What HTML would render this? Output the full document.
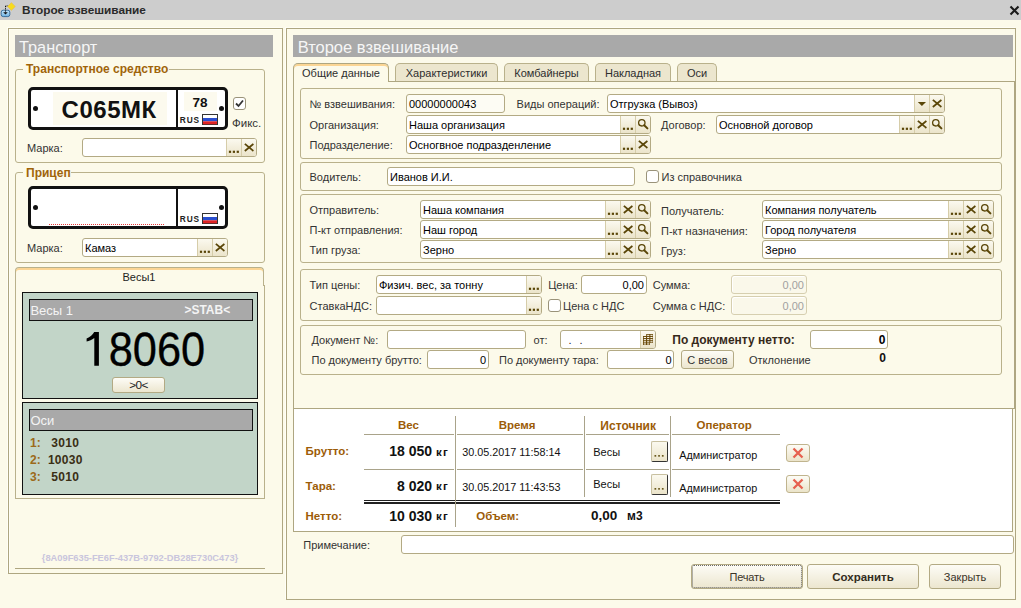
<!DOCTYPE html><html><head><meta charset="utf-8"><style>
html,body{margin:0;padding:0;}
body{width:1021px;height:608px;overflow:hidden;position:relative;background:#fcfaea;font-family:"Liberation Sans",sans-serif;}
.a{position:absolute;box-sizing:border-box;}
.t{white-space:nowrap;}
.inp{border:1px solid #b3aa84;border-radius:3px;}
.grp{border:1px solid #b9b18b;border-radius:3px;}
.sb{background:linear-gradient(#fbf9ef,#ebe4ca);border-left:1px solid #d6cda9;}
.btn{border:1px solid #b3aa84;border-radius:3px;background:linear-gradient(#fdfcf6,#ece6cf);}
</style></head><body>

<div class="a " style="left:0px;top:0px;width:1021px;height:20px;background:#cdcdcd;"></div>
<svg class="a" style="left:0;top:0" width="20" height="20">
<defs><linearGradient id="ig" x1="0" y1="0" x2="0" y2="1"><stop offset="0" stop-color="#c4e6fb"/><stop offset="1" stop-color="#72b4e2"/></linearGradient></defs><rect x="1.2" y="10.2" width="8.6" height="6.4" rx="2" fill="url(#ig)" stroke="#3a6f9c" stroke-width="1"/>
<path d="M5.5 6V13" stroke="#111" stroke-width="1" stroke-dasharray="1 0.8"/>
<path d="M5.5 6H9" stroke="#111" stroke-width="1" stroke-dasharray="1 0.8"/>
<path d="M3.2 12.2H7.8L5.5 14.6Z" fill="#111"/>
<path d="M11.4 2.6L15.3 6.5L11.4 10.4L7.5 6.5Z" fill="#f7dc1e" stroke="#e0b860" stroke-width="0.6"/>
</svg>
<div class="a t" style="left:22px;top:5.01px;font-size:11.8px;line-height:11.8px;font-weight:700;color:#2a2a2a;">Второе взвешивание</div>
<svg class="a" style="left:1008px;top:4px" width="13" height="13"><path d="M2.5 2.5L10.5 10.5M10.5 2.5L2.5 10.5" stroke="#1a1a1a" stroke-width="2.1"/></svg>
<div class="a " style="left:8px;top:28px;width:275px;height:546px;border:1px solid #aea681;box-shadow:-1px -1px 0 #fffef6, inset 1px 1px 0 #fffef4;"></div>
<div class="a " style="left:15px;top:35px;width:258px;height:22px;background:#a9a9a9;"></div>
<div class="a t" style="left:19px;top:38.70px;font-size:16.3px;line-height:16.3px;font-weight:400;color:#f6f6f6;">Транспорт</div>
<div class="a grp" style="left:15px;top:69px;width:250px;height:93.5px;"></div>
<div class="a " style="left:23px;top:67px;width:145.5px;height:5px;background:#fcfaea;"></div>
<div class="a t" style="left:26px;top:63.34px;font-size:12px;line-height:12px;font-weight:700;color:#a0640a;">Транспортное средство</div>
<div class="a " style="left:28px;top:87px;width:200px;height:43px;border:3px solid #111;border-radius:5px;background:#fff;"></div>
<div class="a " style="left:176px;top:87px;width:2.1999999999999886px;height:43px;background:#111;"></div>
<div class="a" style="left:33px;top:106.0px;width:5px;height:5px;border-radius:50%;background:#111"></div>
<div class="a" style="left:219px;top:106.0px;width:5px;height:5px;border-radius:50%;background:#111"></div>
<div class="a t" style="left:179.8px;top:116.47px;font-size:8.3px;line-height:8.3px;font-weight:700;color:#222;letter-spacing:0.9px;">RUS</div>
<svg class="a" style="left:201.5px;top:114px" width="16" height="11"><rect x="0.5" y="0.5" width="15" height="10" fill="#fff" stroke="#333" stroke-width="1"/><rect x="1" y="4" width="14" height="3.3" fill="#2b4fd0"/><rect x="1" y="7.3" width="14" height="3" fill="#e02424"/></svg>
<div class="a " style="left:53px;top:92px;width:114px;height:33px;background:#fcfaee;"></div>
<div class="a t" style="left:61.5px;top:98.18px;font-size:24px;line-height:24px;font-weight:700;color:#111;letter-spacing:0.55px;">С065МК</div>
<div class="a " style="left:184px;top:92px;width:33px;height:19px;background:#fcfaee;"></div>
<div class="a t" style="left:192.5px;top:96.27px;font-size:13.5px;line-height:13.5px;font-weight:700;color:#111;">78</div>
<div class="a " style="left:233px;top:97px;width:13px;height:13px;border:1px solid #9a937a;border-radius:3px;background:#fff;box-sizing:border-box;"></div>
<svg class="a" style="left:233px;top:97px" width="13" height="13"><path d="M3 6.5L5.5 9L10 3.5" stroke="#333" stroke-width="1.8" fill="none"/></svg>
<div class="a t" style="left:232px;top:117.77px;font-size:11.5px;line-height:11.5px;font-weight:400;color:#333333;">Фикс.</div>
<div class="a t" style="left:27px;top:143.19px;font-size:11px;line-height:11px;font-weight:400;color:#333333;">Марка:</div>
<div class="a inp" style="left:82px;top:138px;width:175px;height:19px;background:#fff;"></div>
<div class="a sb" style="left:241px;top:139px;width:15px;height:17px;border-radius:0 2px 2px 0;"></div>
<svg class="a" style="left:241px;top:138.0px" width="15" height="18"><path d="M4.5 6.5L11.7 12.4M11.7 6.5L4.5 12.4" stroke="#5a4608" stroke-width="1.75" stroke-linecap="square"/></svg>
<div class="a sb" style="left:226px;top:139px;width:15px;height:17px;"></div>
<svg class="a" style="left:226px;top:138.0px" width="15" height="18"><rect x="2.9" y="12.7" width="2.2" height="2.2" fill="#5a4608"/><rect x="6.8" y="12.7" width="2.2" height="2.2" fill="#5a4608"/><rect x="10.7" y="12.7" width="2.2" height="2.2" fill="#5a4608"/></svg>
<div class="a grp" style="left:15px;top:172px;width:250px;height:91px;"></div>
<div class="a " style="left:23px;top:170px;width:47.5px;height:5px;background:#fcfaea;"></div>
<div class="a t" style="left:26px;top:166.64px;font-size:12px;line-height:12px;font-weight:700;color:#a0640a;">Прицеп</div>
<div class="a " style="left:28px;top:186px;width:200px;height:43px;border:3px solid #111;border-radius:5px;background:#fff;"></div>
<div class="a " style="left:176px;top:186px;width:2.1999999999999886px;height:43px;background:#111;"></div>
<div class="a" style="left:33px;top:205.0px;width:5px;height:5px;border-radius:50%;background:#111"></div>
<div class="a" style="left:219px;top:205.0px;width:5px;height:5px;border-radius:50%;background:#111"></div>
<div class="a t" style="left:179.8px;top:215.47px;font-size:8.3px;line-height:8.3px;font-weight:700;color:#222;letter-spacing:0.9px;">RUS</div>
<svg class="a" style="left:201.5px;top:213px" width="16" height="11"><rect x="0.5" y="0.5" width="15" height="10" fill="#fff" stroke="#333" stroke-width="1"/><rect x="1" y="4" width="14" height="3.3" fill="#2b4fd0"/><rect x="1" y="7.3" width="14" height="3" fill="#e02424"/></svg>
<div class="a" style="left:49px;top:224px;width:115px;height:1px;background:repeating-linear-gradient(90deg,#e83a3a 0 1px,transparent 1px 2px)"></div>
<div class="a t" style="left:27px;top:243.19px;font-size:11px;line-height:11px;font-weight:400;color:#333333;">Марка:</div>
<div class="a inp" style="left:82px;top:238px;width:146px;height:19px;background:#fff;"></div>
<div class="a sb" style="left:212px;top:239px;width:15px;height:17px;border-radius:0 2px 2px 0;"></div>
<svg class="a" style="left:212px;top:238.0px" width="15" height="18"><path d="M4.5 6.5L11.7 12.4M11.7 6.5L4.5 12.4" stroke="#5a4608" stroke-width="1.75" stroke-linecap="square"/></svg>
<div class="a sb" style="left:197px;top:239px;width:15px;height:17px;"></div>
<svg class="a" style="left:197px;top:238.0px" width="15" height="18"><rect x="2.9" y="12.7" width="2.2" height="2.2" fill="#5a4608"/><rect x="6.8" y="12.7" width="2.2" height="2.2" fill="#5a4608"/><rect x="10.7" y="12.7" width="2.2" height="2.2" fill="#5a4608"/></svg>
<div class="a t" style="left:85px;top:242.99px;font-size:11px;line-height:11px;font-weight:400;color:#000;">Камаз</div>
<div class="a " style="left:15px;top:285px;width:250px;height:214px;border:1px solid #b9b18b;border-top:none;"></div>
<div class="a " style="left:15px;top:267px;width:249px;height:19px;border:1px solid #b9b18b;border-bottom:none;border-radius:4px 4px 0 0;background:#fcfaea;box-shadow:inset 0 2px 0 #fbd594;"></div>
<div class="a t" style="left:-11px;width:300px;text-align:center;top:271.69px;font-size:11px;line-height:11px;font-weight:400;color:#222;">Весы1</div>
<div class="a " style="left:22px;top:292px;width:236px;height:107px;border:1.6px solid #111;background:#c2d5c8;"></div>
<div class="a " style="left:29px;top:299px;width:224px;height:22px;border:1.5px solid #111;background:#a9a9a9;"></div>
<div class="a t" style="left:30.4px;top:304.20px;font-size:13px;line-height:13px;font-weight:400;color:#f4f4f4;">Весы 1</div>
<div class="a t" style="left:184.4px;top:303.94px;font-size:12px;line-height:12px;font-weight:700;color:#f4f4f4;">&gt;STAB&lt;</div>
<div class="a t" style="left:7.300000000000011px;width:300px;text-align:center;top:324.82px;font-size:49px;line-height:49px;font-weight:400;color:#000;transform:scaleX(0.885);-webkit-text-stroke:0.35px #000;">8060</div>
<svg class="a" style="left:80px;top:328px" width="30" height="42"><path d="M14.2 4H18.9V37.7H14.3V9.9C11.9 11.7 9.3 12.9 6.6 13.6V10.4C10.2 8.9 12.6 6.7 14.2 4Z" fill="#000"/></svg>
<div class="a btn" style="left:112px;top:377px;width:53px;height:16px;"></div>
<div class="a t" style="left:-11.5px;width:300px;text-align:center;top:380.31px;font-size:11.8px;line-height:11.8px;font-weight:400;color:#222;letter-spacing:-0.6px;">&gt;0&lt;</div>
<div class="a " style="left:22px;top:402px;width:236px;height:93px;border:1.6px solid #111;background:#c2d5c8;"></div>
<div class="a " style="left:29px;top:409px;width:224px;height:22px;border:1.5px solid #111;background:#a9a9a9;"></div>
<div class="a t" style="left:30.4px;top:413.70px;font-size:13px;line-height:13px;font-weight:400;color:#f4f4f4;">Оси</div>
<div class="a t" style="left:30px;top:437.24px;font-size:12px;line-height:12px;font-weight:700;color:#9c6a1a;">1:</div>
<div class="a t" style="left:-84.7px;width:300px;text-align:center;top:437.24px;font-size:12px;line-height:12px;font-weight:700;color:#3a2e14;letter-spacing:0.3px;">3010</div>
<div class="a t" style="left:30px;top:454.14px;font-size:12px;line-height:12px;font-weight:700;color:#9c6a1a;">2:</div>
<div class="a t" style="left:-84.7px;width:300px;text-align:center;top:454.14px;font-size:12px;line-height:12px;font-weight:700;color:#3a2e14;letter-spacing:0.3px;">10030</div>
<div class="a t" style="left:30px;top:471.34px;font-size:12px;line-height:12px;font-weight:700;color:#9c6a1a;">3:</div>
<div class="a t" style="left:-84.7px;width:300px;text-align:center;top:471.34px;font-size:12px;line-height:12px;font-weight:700;color:#3a2e14;letter-spacing:0.3px;">5010</div>
<div class="a t" style="left:-10px;width:300px;text-align:center;top:554.43px;font-size:9.3px;line-height:9.3px;font-weight:700;color:#c9c5dd;">{8A09F635-FE6F-437B-9792-DB28E730C473}</div>
<div class="a " style="left:15px;top:568px;width:250px;height:1px;background:#aea681;"></div>
<div class="a " style="left:286px;top:28px;width:730px;height:572px;border:1px solid #aea681;box-shadow:-1px -1px 0 #fffef6;"></div>
<div class="a " style="left:293px;top:35px;width:720px;height:22px;background:#a9a9a9;"></div>
<div class="a t" style="left:297.7px;top:38.53px;font-size:16.5px;line-height:16.5px;font-weight:400;color:#f6f6f6;">Второе взвешивание</div>
<div class="a " style="left:293px;top:81px;width:722px;height:328px;border:1px solid #aea681;"></div>
<div class="a " style="left:293px;top:63px;width:96px;height:19px;border:1px solid #aea681;border-bottom:none;border-radius:5px 5px 0 0;background:#fcfaea;box-shadow:inset 0 2px 0 #fbd594;"></div>
<div class="a t" style="left:191.0px;width:300px;text-align:center;top:67.99px;font-size:11px;line-height:11px;font-weight:400;color:#2e2e2e;">Общие данные</div>
<div class="a " style="left:395px;top:63px;width:103px;height:18px;border:1px solid #b9b18b;border-bottom:none;border-radius:5px 5px 0 0;background:#ece6ce;"></div>
<div class="a t" style="left:296.5px;width:300px;text-align:center;top:67.99px;font-size:11px;line-height:11px;font-weight:400;color:#2e2e2e;">Характеристики</div>
<div class="a " style="left:504px;top:63px;width:85px;height:18px;border:1px solid #b9b18b;border-bottom:none;border-radius:5px 5px 0 0;background:#ece6ce;"></div>
<div class="a t" style="left:396.5px;width:300px;text-align:center;top:67.99px;font-size:11px;line-height:11px;font-weight:400;color:#2e2e2e;">Комбайнеры</div>
<div class="a " style="left:595px;top:63px;width:76px;height:18px;border:1px solid #b9b18b;border-bottom:none;border-radius:5px 5px 0 0;background:#ece6ce;"></div>
<div class="a t" style="left:483.0px;width:300px;text-align:center;top:67.99px;font-size:11px;line-height:11px;font-weight:400;color:#2e2e2e;">Накладная</div>
<div class="a " style="left:677px;top:63px;width:40px;height:18px;border:1px solid #b9b18b;border-bottom:none;border-radius:5px 5px 0 0;background:#ece6ce;"></div>
<div class="a t" style="left:547.0px;width:300px;text-align:center;top:67.99px;font-size:11px;line-height:11px;font-weight:400;color:#2e2e2e;">Оси</div>
<div class="a grp" style="left:300px;top:88px;width:702px;height:71px;"></div>
<div class="a t" style="left:309.5px;top:98.99px;font-size:11px;line-height:11px;font-weight:400;color:#333333;">№ взвешивания:</div>
<div class="a inp" style="left:406px;top:94px;width:99px;height:19px;background:#fdfcf4;"></div>
<div class="a t" style="left:409px;top:98.99px;font-size:11px;line-height:11px;font-weight:400;color:#000;">00000000043</div>
<div class="a t" style="left:516.6px;top:98.99px;font-size:11px;line-height:11px;font-weight:400;color:#333333;">Виды операций:</div>
<div class="a inp" style="left:607px;top:94px;width:338px;height:19px;background:#fff;"></div>
<div class="a sb" style="left:929px;top:95px;width:15px;height:17px;border-radius:0 2px 2px 0;"></div>
<svg class="a" style="left:929px;top:94.0px" width="15" height="18"><path d="M4.5 6.5L11.7 12.4M11.7 6.5L4.5 12.4" stroke="#5a4608" stroke-width="1.75" stroke-linecap="square"/></svg>
<div class="a sb" style="left:914px;top:95px;width:15px;height:17px;"></div>
<svg class="a" style="left:914px;top:94.0px" width="15" height="18"><path d="M3.8 7.9H12L7.9 12.1Z" fill="#5a4608"/></svg>
<div class="a t" style="left:610px;top:98.99px;font-size:11px;line-height:11px;font-weight:400;color:#000;">Отгрузка (Вывоз)</div>
<div class="a t" style="left:309.5px;top:119.79px;font-size:11px;line-height:11px;font-weight:400;color:#333333;">Организация:</div>
<div class="a inp" style="left:406px;top:115px;width:245px;height:19px;background:#fff;"></div>
<div class="a sb" style="left:635px;top:116px;width:15px;height:17px;border-radius:0 2px 2px 0;"></div>
<svg class="a" style="left:635px;top:115.0px" width="15" height="18"><circle cx="6.8" cy="7.8" r="3.2" stroke="#5a4608" stroke-width="1.3" fill="none"/><path d="M9.2 10.2L12.4 13.4" stroke="#5a4608" stroke-width="2" stroke-linecap="round"/></svg>
<div class="a sb" style="left:620px;top:116px;width:15px;height:17px;"></div>
<svg class="a" style="left:620px;top:115.0px" width="15" height="18"><rect x="2.9" y="12.7" width="2.2" height="2.2" fill="#5a4608"/><rect x="6.8" y="12.7" width="2.2" height="2.2" fill="#5a4608"/><rect x="10.7" y="12.7" width="2.2" height="2.2" fill="#5a4608"/></svg>
<div class="a t" style="left:409px;top:119.99px;font-size:11px;line-height:11px;font-weight:400;color:#000;">Наша организация</div>
<div class="a t" style="left:661px;top:119.79px;font-size:11px;line-height:11px;font-weight:400;color:#333333;">Договор:</div>
<div class="a inp" style="left:716px;top:115px;width:229px;height:19px;background:#fff;"></div>
<div class="a sb" style="left:929px;top:116px;width:15px;height:17px;border-radius:0 2px 2px 0;"></div>
<svg class="a" style="left:929px;top:115.0px" width="15" height="18"><circle cx="6.8" cy="7.8" r="3.2" stroke="#5a4608" stroke-width="1.3" fill="none"/><path d="M9.2 10.2L12.4 13.4" stroke="#5a4608" stroke-width="2" stroke-linecap="round"/></svg>
<div class="a sb" style="left:914px;top:116px;width:15px;height:17px;"></div>
<svg class="a" style="left:914px;top:115.0px" width="15" height="18"><path d="M4.5 6.5L11.7 12.4M11.7 6.5L4.5 12.4" stroke="#5a4608" stroke-width="1.75" stroke-linecap="square"/></svg>
<div class="a sb" style="left:899px;top:116px;width:15px;height:17px;"></div>
<svg class="a" style="left:899px;top:115.0px" width="15" height="18"><rect x="2.9" y="12.7" width="2.2" height="2.2" fill="#5a4608"/><rect x="6.8" y="12.7" width="2.2" height="2.2" fill="#5a4608"/><rect x="10.7" y="12.7" width="2.2" height="2.2" fill="#5a4608"/></svg>
<div class="a t" style="left:719px;top:119.99px;font-size:11px;line-height:11px;font-weight:400;color:#000;">Основной договор</div>
<div class="a t" style="left:309.5px;top:140.19px;font-size:11px;line-height:11px;font-weight:400;color:#333333;">Подразделение:</div>
<div class="a inp" style="left:406px;top:135px;width:245px;height:19px;background:#fff;"></div>
<div class="a sb" style="left:635px;top:136px;width:15px;height:17px;border-radius:0 2px 2px 0;"></div>
<svg class="a" style="left:635px;top:135.0px" width="15" height="18"><path d="M4.5 6.5L11.7 12.4M11.7 6.5L4.5 12.4" stroke="#5a4608" stroke-width="1.75" stroke-linecap="square"/></svg>
<div class="a sb" style="left:620px;top:136px;width:15px;height:17px;"></div>
<svg class="a" style="left:620px;top:135.0px" width="15" height="18"><rect x="2.9" y="12.7" width="2.2" height="2.2" fill="#5a4608"/><rect x="6.8" y="12.7" width="2.2" height="2.2" fill="#5a4608"/><rect x="10.7" y="12.7" width="2.2" height="2.2" fill="#5a4608"/></svg>
<div class="a t" style="left:409px;top:139.99px;font-size:11px;line-height:11px;font-weight:400;color:#000;">Осногвное подразденление</div>
<div class="a grp" style="left:300px;top:162px;width:702px;height:29px;"></div>
<div class="a t" style="left:309.5px;top:172.19px;font-size:11px;line-height:11px;font-weight:400;color:#333333;">Водитель:</div>
<div class="a inp" style="left:387px;top:167px;width:248px;height:19px;background:#fff;"></div>
<div class="a t" style="left:390px;top:171.99px;font-size:11px;line-height:11px;font-weight:400;color:#000;">Иванов И.И.</div>
<div class="a " style="left:646px;top:170px;width:13px;height:13px;border:1px solid #9a937a;border-radius:3px;background:#fff;box-sizing:border-box;"></div>
<div class="a t" style="left:661.5px;top:172.19px;font-size:11px;line-height:11px;font-weight:400;color:#333333;">Из справочника</div>
<div class="a grp" style="left:300px;top:194px;width:702px;height:69px;"></div>
<div class="a t" style="left:309.5px;top:205.19px;font-size:11px;line-height:11px;font-weight:400;color:#333333;">Отправитель:</div>
<div class="a inp" style="left:420px;top:200px;width:231px;height:18.5px;background:#fff;"></div>
<div class="a sb" style="left:635px;top:201px;width:15px;height:16.5px;border-radius:0 2px 2px 0;"></div>
<svg class="a" style="left:635px;top:199.75px" width="15" height="18"><circle cx="6.8" cy="7.8" r="3.2" stroke="#5a4608" stroke-width="1.3" fill="none"/><path d="M9.2 10.2L12.4 13.4" stroke="#5a4608" stroke-width="2" stroke-linecap="round"/></svg>
<div class="a sb" style="left:620px;top:201px;width:15px;height:16.5px;"></div>
<svg class="a" style="left:620px;top:199.75px" width="15" height="18"><path d="M4.5 6.5L11.7 12.4M11.7 6.5L4.5 12.4" stroke="#5a4608" stroke-width="1.75" stroke-linecap="square"/></svg>
<div class="a sb" style="left:605px;top:201px;width:15px;height:16.5px;"></div>
<svg class="a" style="left:605px;top:199.75px" width="15" height="18"><rect x="2.9" y="12.7" width="2.2" height="2.2" fill="#5a4608"/><rect x="6.8" y="12.7" width="2.2" height="2.2" fill="#5a4608"/><rect x="10.7" y="12.7" width="2.2" height="2.2" fill="#5a4608"/></svg>
<div class="a t" style="left:423px;top:204.74px;font-size:11px;line-height:11px;font-weight:400;color:#000;">Наша компания</div>
<div class="a t" style="left:309.5px;top:225.19px;font-size:11px;line-height:11px;font-weight:400;color:#333333;">П-кт отправления:</div>
<div class="a inp" style="left:420px;top:220px;width:231px;height:18.5px;background:#fff;"></div>
<div class="a sb" style="left:635px;top:221px;width:15px;height:16.5px;border-radius:0 2px 2px 0;"></div>
<svg class="a" style="left:635px;top:219.75px" width="15" height="18"><circle cx="6.8" cy="7.8" r="3.2" stroke="#5a4608" stroke-width="1.3" fill="none"/><path d="M9.2 10.2L12.4 13.4" stroke="#5a4608" stroke-width="2" stroke-linecap="round"/></svg>
<div class="a sb" style="left:620px;top:221px;width:15px;height:16.5px;"></div>
<svg class="a" style="left:620px;top:219.75px" width="15" height="18"><path d="M4.5 6.5L11.7 12.4M11.7 6.5L4.5 12.4" stroke="#5a4608" stroke-width="1.75" stroke-linecap="square"/></svg>
<div class="a sb" style="left:605px;top:221px;width:15px;height:16.5px;"></div>
<svg class="a" style="left:605px;top:219.75px" width="15" height="18"><rect x="2.9" y="12.7" width="2.2" height="2.2" fill="#5a4608"/><rect x="6.8" y="12.7" width="2.2" height="2.2" fill="#5a4608"/><rect x="10.7" y="12.7" width="2.2" height="2.2" fill="#5a4608"/></svg>
<div class="a t" style="left:423px;top:224.74px;font-size:11px;line-height:11px;font-weight:400;color:#000;">Наш город</div>
<div class="a t" style="left:309.5px;top:245.19px;font-size:11px;line-height:11px;font-weight:400;color:#333333;">Тип груза:</div>
<div class="a inp" style="left:420px;top:240px;width:231px;height:18.5px;background:#fff;"></div>
<div class="a sb" style="left:635px;top:241px;width:15px;height:16.5px;border-radius:0 2px 2px 0;"></div>
<svg class="a" style="left:635px;top:239.75px" width="15" height="18"><circle cx="6.8" cy="7.8" r="3.2" stroke="#5a4608" stroke-width="1.3" fill="none"/><path d="M9.2 10.2L12.4 13.4" stroke="#5a4608" stroke-width="2" stroke-linecap="round"/></svg>
<div class="a sb" style="left:620px;top:241px;width:15px;height:16.5px;"></div>
<svg class="a" style="left:620px;top:239.75px" width="15" height="18"><path d="M4.5 6.5L11.7 12.4M11.7 6.5L4.5 12.4" stroke="#5a4608" stroke-width="1.75" stroke-linecap="square"/></svg>
<div class="a sb" style="left:605px;top:241px;width:15px;height:16.5px;"></div>
<svg class="a" style="left:605px;top:239.75px" width="15" height="18"><rect x="2.9" y="12.7" width="2.2" height="2.2" fill="#5a4608"/><rect x="6.8" y="12.7" width="2.2" height="2.2" fill="#5a4608"/><rect x="10.7" y="12.7" width="2.2" height="2.2" fill="#5a4608"/></svg>
<div class="a t" style="left:423px;top:244.74px;font-size:11px;line-height:11px;font-weight:400;color:#000;">Зерно</div>
<div class="a t" style="left:661px;top:206.19px;font-size:11px;line-height:11px;font-weight:400;color:#333333;">Получатель:</div>
<div class="a inp" style="left:762px;top:200px;width:232px;height:18.5px;background:#fff;"></div>
<div class="a sb" style="left:978px;top:201px;width:15px;height:16.5px;border-radius:0 2px 2px 0;"></div>
<svg class="a" style="left:978px;top:199.75px" width="15" height="18"><circle cx="6.8" cy="7.8" r="3.2" stroke="#5a4608" stroke-width="1.3" fill="none"/><path d="M9.2 10.2L12.4 13.4" stroke="#5a4608" stroke-width="2" stroke-linecap="round"/></svg>
<div class="a sb" style="left:963px;top:201px;width:15px;height:16.5px;"></div>
<svg class="a" style="left:963px;top:199.75px" width="15" height="18"><path d="M4.5 6.5L11.7 12.4M11.7 6.5L4.5 12.4" stroke="#5a4608" stroke-width="1.75" stroke-linecap="square"/></svg>
<div class="a sb" style="left:948px;top:201px;width:15px;height:16.5px;"></div>
<svg class="a" style="left:948px;top:199.75px" width="15" height="18"><rect x="2.9" y="12.7" width="2.2" height="2.2" fill="#5a4608"/><rect x="6.8" y="12.7" width="2.2" height="2.2" fill="#5a4608"/><rect x="10.7" y="12.7" width="2.2" height="2.2" fill="#5a4608"/></svg>
<div class="a t" style="left:765px;top:204.74px;font-size:11px;line-height:11px;font-weight:400;color:#000;">Компания получатель</div>
<div class="a t" style="left:661px;top:226.19px;font-size:11px;line-height:11px;font-weight:400;color:#333333;">П-кт назначения:</div>
<div class="a inp" style="left:762px;top:220px;width:232px;height:18.5px;background:#fff;"></div>
<div class="a sb" style="left:978px;top:221px;width:15px;height:16.5px;border-radius:0 2px 2px 0;"></div>
<svg class="a" style="left:978px;top:219.75px" width="15" height="18"><circle cx="6.8" cy="7.8" r="3.2" stroke="#5a4608" stroke-width="1.3" fill="none"/><path d="M9.2 10.2L12.4 13.4" stroke="#5a4608" stroke-width="2" stroke-linecap="round"/></svg>
<div class="a sb" style="left:963px;top:221px;width:15px;height:16.5px;"></div>
<svg class="a" style="left:963px;top:219.75px" width="15" height="18"><path d="M4.5 6.5L11.7 12.4M11.7 6.5L4.5 12.4" stroke="#5a4608" stroke-width="1.75" stroke-linecap="square"/></svg>
<div class="a sb" style="left:948px;top:221px;width:15px;height:16.5px;"></div>
<svg class="a" style="left:948px;top:219.75px" width="15" height="18"><rect x="2.9" y="12.7" width="2.2" height="2.2" fill="#5a4608"/><rect x="6.8" y="12.7" width="2.2" height="2.2" fill="#5a4608"/><rect x="10.7" y="12.7" width="2.2" height="2.2" fill="#5a4608"/></svg>
<div class="a t" style="left:765px;top:224.74px;font-size:11px;line-height:11px;font-weight:400;color:#000;">Город получателя</div>
<div class="a t" style="left:661px;top:246.19px;font-size:11px;line-height:11px;font-weight:400;color:#333333;">Груз:</div>
<div class="a inp" style="left:762px;top:240px;width:232px;height:18.5px;background:#fff;"></div>
<div class="a sb" style="left:978px;top:241px;width:15px;height:16.5px;border-radius:0 2px 2px 0;"></div>
<svg class="a" style="left:978px;top:239.75px" width="15" height="18"><circle cx="6.8" cy="7.8" r="3.2" stroke="#5a4608" stroke-width="1.3" fill="none"/><path d="M9.2 10.2L12.4 13.4" stroke="#5a4608" stroke-width="2" stroke-linecap="round"/></svg>
<div class="a sb" style="left:963px;top:241px;width:15px;height:16.5px;"></div>
<svg class="a" style="left:963px;top:239.75px" width="15" height="18"><path d="M4.5 6.5L11.7 12.4M11.7 6.5L4.5 12.4" stroke="#5a4608" stroke-width="1.75" stroke-linecap="square"/></svg>
<div class="a sb" style="left:948px;top:241px;width:15px;height:16.5px;"></div>
<svg class="a" style="left:948px;top:239.75px" width="15" height="18"><rect x="2.9" y="12.7" width="2.2" height="2.2" fill="#5a4608"/><rect x="6.8" y="12.7" width="2.2" height="2.2" fill="#5a4608"/><rect x="10.7" y="12.7" width="2.2" height="2.2" fill="#5a4608"/></svg>
<div class="a t" style="left:765px;top:244.74px;font-size:11px;line-height:11px;font-weight:400;color:#000;">Зерно</div>
<div class="a grp" style="left:300px;top:269px;width:702px;height:52px;"></div>
<div class="a t" style="left:309.6px;top:280.39px;font-size:11px;line-height:11px;font-weight:400;color:#333333;">Тип цены:</div>
<div class="a inp" style="left:376px;top:275px;width:166px;height:19px;background:#fff;"></div>
<div class="a sb" style="left:526px;top:276px;width:15px;height:17px;border-radius:0 2px 2px 0;"></div>
<svg class="a" style="left:526px;top:275.0px" width="15" height="18"><rect x="2.9" y="12.7" width="2.2" height="2.2" fill="#5a4608"/><rect x="6.8" y="12.7" width="2.2" height="2.2" fill="#5a4608"/><rect x="10.7" y="12.7" width="2.2" height="2.2" fill="#5a4608"/></svg>
<div class="a t" style="left:379px;top:279.99px;font-size:11px;line-height:11px;font-weight:400;color:#000;">Физич. вес, за тонну</div>
<div class="a t" style="left:309.6px;top:300.99px;font-size:11px;line-height:11px;font-weight:400;color:#333333;">СтавкаНДС:</div>
<div class="a inp" style="left:376px;top:296px;width:166px;height:19px;background:#fff;"></div>
<div class="a sb" style="left:526px;top:297px;width:15px;height:17px;border-radius:0 2px 2px 0;"></div>
<svg class="a" style="left:526px;top:296.0px" width="15" height="18"><rect x="2.9" y="12.7" width="2.2" height="2.2" fill="#5a4608"/><rect x="6.8" y="12.7" width="2.2" height="2.2" fill="#5a4608"/><rect x="10.7" y="12.7" width="2.2" height="2.2" fill="#5a4608"/></svg>
<div class="a t" style="left:548.2px;top:280.39px;font-size:11px;line-height:11px;font-weight:400;color:#333333;">Цена:</div>
<div class="a inp" style="left:581px;top:275px;width:66px;height:19px;background:#fff;"></div>
<div class="a t" style="right:377px;top:279.99px;font-size:11px;line-height:11px;font-weight:400;color:#000;text-align:right;">0,00</div>
<div class="a " style="left:548px;top:299.2px;width:13px;height:13.0px;border:1px solid #9a937a;border-radius:3px;background:#fff;box-sizing:border-box;"></div>
<div class="a t" style="left:563px;top:300.99px;font-size:11px;line-height:11px;font-weight:400;color:#333333;">Цена с НДС</div>
<div class="a t" style="left:652.7px;top:280.39px;font-size:11px;line-height:11px;font-weight:400;color:#333333;">Сумма:</div>
<div class="a inp" style="left:731px;top:275px;width:76px;height:19px;background:#faf8ea;border-color:#d6cfb0;box-shadow:inset 1px 1px 0 #fff;"></div>
<div class="a t" style="right:217px;top:279.99px;font-size:11px;line-height:11px;font-weight:400;color:#a0a0a0;text-align:right;">0,00</div>
<div class="a t" style="left:652.7px;top:300.99px;font-size:11px;line-height:11px;font-weight:400;color:#333333;">Сумма с НДС:</div>
<div class="a inp" style="left:731px;top:296px;width:76px;height:19px;background:#faf8ea;border-color:#d6cfb0;box-shadow:inset 1px 1px 0 #fff;"></div>
<div class="a t" style="right:217px;top:300.99px;font-size:11px;line-height:11px;font-weight:400;color:#a0a0a0;text-align:right;">0,00</div>
<div class="a grp" style="left:300px;top:325px;width:702px;height:50px;"></div>
<div class="a t" style="left:311.5px;top:335.39px;font-size:11px;line-height:11px;font-weight:400;color:#333333;">Документ №:</div>
<div class="a inp" style="left:387px;top:330px;width:139px;height:19px;background:#fff;"></div>
<div class="a t" style="left:533.5px;top:335.39px;font-size:11px;line-height:11px;font-weight:400;color:#333333;">от:</div>
<div class="a inp" style="left:560px;top:330px;width:96px;height:19px;background:#fff;"></div>
<div class="a sb" style="left:640px;top:331px;width:15px;height:17px;border-radius:0 2px 2px 0;"></div>
<svg class="a" style="left:640px;top:330.0px" width="15" height="18"><path d="M6.2 4H13V13H10V15H3V6H6.2Z" fill="#6a4a08"/><rect x="7.10" y="4.80" width="2.2" height="1.1" fill="#fbf8ee"/><rect x="10.40" y="4.80" width="2.2" height="1.1" fill="#fbf8ee"/><rect x="3.80" y="6.95" width="2.2" height="1.1" fill="#fbf8ee"/><rect x="7.10" y="6.95" width="2.2" height="1.1" fill="#fbf8ee"/><rect x="10.40" y="6.95" width="2.2" height="1.1" fill="#fbf8ee"/><rect x="3.80" y="9.10" width="2.2" height="1.1" fill="#fbf8ee"/><rect x="7.10" y="9.10" width="2.2" height="1.1" fill="#fbf8ee"/><rect x="10.40" y="9.10" width="2.2" height="1.1" fill="#fbf8ee"/><rect x="3.80" y="11.25" width="2.2" height="1.1" fill="#fbf8ee"/><rect x="7.10" y="11.25" width="2.2" height="1.1" fill="#fbf8ee"/><rect x="10.40" y="11.25" width="2.2" height="1.1" fill="#fbf8ee"/><rect x="3.80" y="13.40" width="2.2" height="1.1" fill="#fbf8ee"/><rect x="7.10" y="13.40" width="2.2" height="1.1" fill="#fbf8ee"/></svg>
<div class="a t" style="left:568.5px;top:335.39px;font-size:11px;line-height:11px;font-weight:400;color:#222;">.</div>
<div class="a t" style="left:579.5px;top:335.39px;font-size:11px;line-height:11px;font-weight:400;color:#222;">.</div>
<div class="a t" style="left:672.3px;top:333.74px;font-size:12px;line-height:12px;font-weight:700;color:#36291a;">По документу нетто:</div>
<div class="a inp" style="left:810px;top:330px;width:78px;height:19px;background:#fff;"></div>
<div class="a t" style="right:135.5px;top:334.14px;font-size:12px;line-height:12px;font-weight:700;color:#000;text-align:right;">0</div>
<div class="a t" style="left:311.5px;top:355.39px;font-size:11px;line-height:11px;font-weight:400;color:#333333;">По документу брутто:</div>
<div class="a inp" style="left:427px;top:350px;width:62px;height:19px;background:#fff;"></div>
<div class="a t" style="right:535px;top:354.99px;font-size:11px;line-height:11px;font-weight:400;color:#000;text-align:right;">0</div>
<div class="a t" style="left:499px;top:355.39px;font-size:11px;line-height:11px;font-weight:400;color:#333333;">По документу тара:</div>
<div class="a inp" style="left:607px;top:350px;width:67px;height:19px;background:#fff;"></div>
<div class="a t" style="right:349.5px;top:354.99px;font-size:11px;line-height:11px;font-weight:400;color:#000;text-align:right;">0</div>
<div class="a btn" style="left:681px;top:350px;width:53px;height:19px;"></div>
<div class="a t" style="left:557.5px;width:300px;text-align:center;top:355.39px;font-size:11px;line-height:11px;font-weight:400;color:#333333;">С весов</div>
<div class="a t" style="left:749px;top:355.39px;font-size:11px;line-height:11px;font-weight:400;color:#333333;">Отклонение</div>
<div class="a t" style="right:135px;top:352.14px;font-size:12px;line-height:12px;font-weight:700;color:#111;text-align:right;">0</div>
<div class="a " style="left:293px;top:409px;width:720px;height:123px;background:#fff;border:1px solid #aea681;border-top:none;"></div>
<div class="a t" style="left:258.4px;width:300px;text-align:center;top:420.07px;font-size:11.5px;line-height:11.5px;font-weight:700;color:#9c5c08;">Вес</div>
<div class="a t" style="left:367.20000000000005px;width:300px;text-align:center;top:420.07px;font-size:11.5px;line-height:11.5px;font-weight:700;color:#9c5c08;">Время</div>
<div class="a t" style="left:478.20000000000005px;width:300px;text-align:center;top:419.64px;font-size:12px;line-height:12px;font-weight:700;color:#9c5c08;">Источник</div>
<div class="a t" style="left:574.2px;width:300px;text-align:center;top:420.07px;font-size:11.5px;line-height:11.5px;font-weight:700;color:#9c5c08;">Оператор</div>
<div class="a " style="left:364px;top:434px;width:90px;height:1.3000000000000114px;background:#a9a38a;"></div>
<div class="a " style="left:457px;top:434px;width:126px;height:1.3000000000000114px;background:#a9a38a;"></div>
<div class="a " style="left:586px;top:434px;width:83px;height:1.3000000000000114px;background:#a9a38a;"></div>
<div class="a " style="left:672px;top:434px;width:108px;height:1.3000000000000114px;background:#a9a38a;"></div>
<div class="a " style="left:364px;top:469px;width:90px;height:1.3000000000000114px;background:#a9a38a;"></div>
<div class="a " style="left:457px;top:469px;width:126px;height:1.3000000000000114px;background:#a9a38a;"></div>
<div class="a " style="left:586px;top:469px;width:83px;height:1.3000000000000114px;background:#a9a38a;"></div>
<div class="a " style="left:672px;top:469px;width:108px;height:1.3000000000000114px;background:#a9a38a;"></div>
<div class="a " style="left:364px;top:500px;width:416px;height:1.3999999999999773px;background:#222;"></div>
<div class="a " style="left:364px;top:502.3px;width:416px;height:1.3999999999999773px;background:#222;"></div>
<div class="a " style="left:454.6px;top:416px;width:1.599999999999966px;height:111px;background:#a9a38a;"></div>
<div class="a " style="left:583.6px;top:416px;width:1.6000000000000227px;height:81px;background:#a9a38a;"></div>
<div class="a " style="left:669.5px;top:416px;width:1.6000000000000227px;height:81px;background:#a9a38a;"></div>
<div class="a t" style="left:305.5px;top:446.07px;font-size:11.5px;line-height:11.5px;font-weight:700;color:#9c5c08;">Брутто:</div>
<div class="a t" style="right:589px;top:444.45px;font-size:14px;line-height:14px;font-weight:700;color:#111;text-align:right;">18 050</div>
<div class="a t" style="left:436px;top:446.57px;font-size:11.5px;line-height:11.5px;font-weight:700;color:#111;letter-spacing:1.2px;">кг</div>
<div class="a t" style="left:462.3px;top:447.16px;font-size:10.8px;line-height:10.8px;font-weight:400;color:#111;">30.05.2017 11:58:14</div>
<div class="a t" style="left:593.2px;top:446.99px;font-size:11px;line-height:11px;font-weight:400;color:#111;">Весы</div>
<div class="a " style="left:651px;top:440.5px;width:16.5px;height:21.5px;background:linear-gradient(#fbf9ef,#ebe4ca);border:1px solid #c8c0a0;border-right:1.5px solid #333;border-bottom:1.5px solid #333;border-radius:2px;"></div>
<svg class="a" style="left:653px;top:454.5px" width="12" height="3"><rect x="1.5" y="0" width="1.7" height="1.7" fill="#6b5a1e"/><rect x="5.2" y="0" width="1.7" height="1.7" fill="#6b5a1e"/><rect x="8.9" y="0" width="1.7" height="1.7" fill="#6b5a1e"/></svg>
<div class="a t" style="left:679.3px;top:450.16px;font-size:10.8px;line-height:10.8px;font-weight:400;color:#111;">Администратор</div>
<div class="a " style="left:786px;top:444.3px;width:23.5px;height:18.0px;border:1px solid #c0b48e;border-radius:3px;background:linear-gradient(#fdfcf6,#ebe4ca);"></div>
<svg class="a" style="left:791.7px;top:447.3px" width="12" height="12"><path d="M1.5 1.5L10.5 10.5M10.5 1.5L1.5 10.5" stroke="#e6604f" stroke-width="2.3"/></svg>
<div class="a t" style="left:305.5px;top:480.57px;font-size:11.5px;line-height:11.5px;font-weight:700;color:#9c5c08;">Тара:</div>
<div class="a t" style="right:589px;top:478.95px;font-size:14px;line-height:14px;font-weight:700;color:#111;text-align:right;">8 020</div>
<div class="a t" style="left:436px;top:481.07px;font-size:11.5px;line-height:11.5px;font-weight:700;color:#111;letter-spacing:1.2px;">кг</div>
<div class="a t" style="left:462.3px;top:481.66px;font-size:10.8px;line-height:10.8px;font-weight:400;color:#111;">30.05.2017 11:43:53</div>
<div class="a t" style="left:593.2px;top:479.39px;font-size:11px;line-height:11px;font-weight:400;color:#111;">Весы</div>
<div class="a " style="left:651px;top:473.5px;width:16.5px;height:21.5px;background:linear-gradient(#fbf9ef,#ebe4ca);border:1px solid #c8c0a0;border-right:1.5px solid #333;border-bottom:1.5px solid #333;border-radius:2px;"></div>
<svg class="a" style="left:653px;top:487.5px" width="12" height="3"><rect x="1.5" y="0" width="1.7" height="1.7" fill="#6b5a1e"/><rect x="5.2" y="0" width="1.7" height="1.7" fill="#6b5a1e"/><rect x="8.9" y="0" width="1.7" height="1.7" fill="#6b5a1e"/></svg>
<div class="a t" style="left:679.3px;top:483.06px;font-size:10.8px;line-height:10.8px;font-weight:400;color:#111;">Администратор</div>
<div class="a " style="left:786px;top:475px;width:23.5px;height:18px;border:1px solid #c0b48e;border-radius:3px;background:linear-gradient(#fdfcf6,#ebe4ca);"></div>
<svg class="a" style="left:791.7px;top:478px" width="12" height="12"><path d="M1.5 1.5L10.5 10.5M10.5 1.5L1.5 10.5" stroke="#e6604f" stroke-width="2.3"/></svg>
<div class="a t" style="left:305.5px;top:510.77px;font-size:11.5px;line-height:11.5px;font-weight:700;color:#9c5c08;">Нетто:</div>
<div class="a t" style="right:589px;top:509.15px;font-size:14px;line-height:14px;font-weight:700;color:#111;text-align:right;">10 030</div>
<div class="a t" style="left:436px;top:511.27px;font-size:11.5px;line-height:11.5px;font-weight:700;color:#111;letter-spacing:1.2px;">кг</div>
<div class="a t" style="left:476.3px;top:510.77px;font-size:11.5px;line-height:11.5px;font-weight:700;color:#9c5c08;">Объем:</div>
<div class="a t" style="left:591px;top:508.57px;font-size:13.5px;line-height:13.5px;font-weight:700;color:#111;">0,00</div>
<div class="a t" style="left:627px;top:509.84px;font-size:12px;line-height:12px;font-weight:700;color:#111;">м3</div>
<div class="a t" style="left:303.3px;top:540.19px;font-size:11px;line-height:11px;font-weight:400;color:#333333;">Примечание:</div>
<div class="a inp" style="left:401px;top:535px;width:613px;height:19px;background:#fff;"></div>
<div class="a btn" style="left:691px;top:564px;width:112px;height:25px;"></div>
<div class="a" style="left:692px;top:565px;width:110px;height:23px;border:1px dotted #6a6a6a;border-radius:2px;"></div>
<div class="a t" style="left:597px;width:300px;text-align:center;top:572.19px;font-size:11px;line-height:11px;font-weight:400;color:#3a3428;letter-spacing:-0.2px;">Печать</div>
<div class="a btn" style="left:807px;top:564px;width:112px;height:25px;"></div>
<div class="a t" style="left:713px;width:300px;text-align:center;top:571.77px;font-size:11.5px;line-height:11.5px;font-weight:700;color:#332c1c;">Сохранить</div>
<div class="a btn" style="left:929px;top:564px;width:72px;height:25px;"></div>
<div class="a t" style="left:815px;width:300px;text-align:center;top:572.19px;font-size:11px;line-height:11px;font-weight:400;color:#3a3428;">Закрыть</div>
</body></html>
